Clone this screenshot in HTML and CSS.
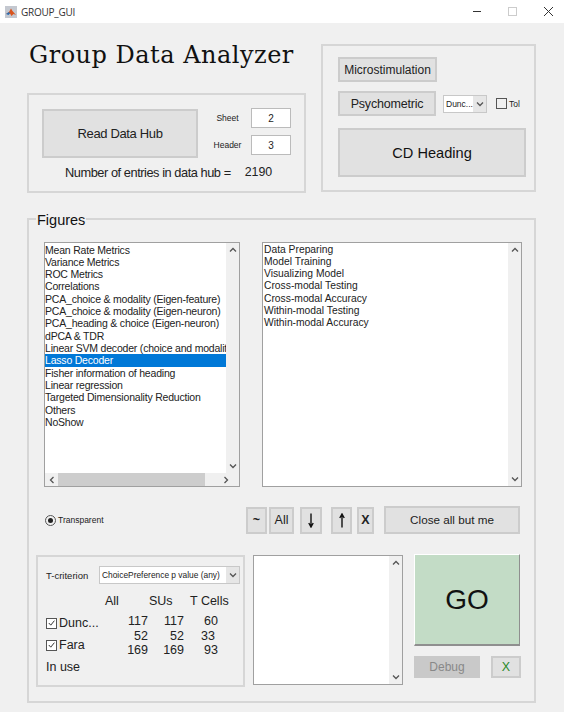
FILE: index.html
```html
<!DOCTYPE html>
<html lang="en">
<head>
  <meta charset="UTF-8" />
  <meta name="viewport" content="width=device-width, initial-scale=1" />
  <title>GROUP_GUI</title>
  <link rel="stylesheet" href="styles.css">
</head>
<body>
  <svg class="defs" width="0" height="0" aria-hidden="true">
    <symbol id="chev-up" viewBox="0 0 8 6"><path d="M1 4.5 L4 1.5 L7 4.5" fill="none" stroke="#555" stroke-width="1.3"/></symbol>
    <symbol id="chev-down" viewBox="0 0 8 6"><path d="M1 1.5 L4 4.5 L7 1.5" fill="none" stroke="#555" stroke-width="1.3"/></symbol>
    <symbol id="chev-left" viewBox="0 0 6 8"><path d="M4.5 1 L1.5 4 L4.5 7" fill="none" stroke="#555" stroke-width="1.3"/></symbol>
    <symbol id="chev-right" viewBox="0 0 6 8"><path d="M1.5 1 L4.5 4 L1.5 7" fill="none" stroke="#555" stroke-width="1.3"/></symbol>
    <symbol id="tick" viewBox="0 0 10 10"><path d="M2 5 L4.2 7.4 L8.2 2.4" fill="none" stroke="#333" stroke-width="1.1"/></symbol>
  </svg>

  <header class="titlebar">
    <svg class="app-icon" width="12" height="12" viewBox="0 0 12 12" aria-hidden="true">
      <rect width="12" height="12" fill="#c4c8d0"/>
      <path d="M1 8 L4 6 L6 2.5 L7.5 5 L11 9 L8.5 8 L6.5 10 L5 7.5 Z" fill="#d9541e"/>
      <path d="M1 8 L4 6 L5 7.5 L3.5 9 Z" fill="#2b6cb0"/>
    </svg>
    <span class="app-name">GROUP_GUI</span>
    <div class="win-controls">
      <svg width="9" height="9" viewBox="0 0 9 9" aria-hidden="true"><path d="M0 4.5 H8" stroke="#333" stroke-width="1"/></svg>
      <svg width="9" height="9" viewBox="0 0 9 9" aria-hidden="true"><rect x="0.5" y="0.5" width="8" height="8" fill="none" stroke="#ccc"/></svg>
      <svg width="11" height="11" viewBox="0 0 11 11" aria-hidden="true"><path d="M1 1 L10 10 M10 1 L1 10" stroke="#333" stroke-width="1"/></svg>
    </div>
  </header>

  <main class="content">
    <div class="top">
      <div class="top-left">
        <h1 class="app-title">Group Data Analyzer</h1>
        <section class="panel hub-panel">
          <div class="hub-row">
            <button class="btn read-btn">Read Data Hub</button>
            <div class="hub-fields">
              <label class="field"><span class="field-label">Sheet</span><input class="field-input" value="2"></label>
              <label class="field"><span class="field-label">Header</span><input class="field-input" value="3"></label>
            </div>
          </div>
          <p class="entries"><span class="entries-label">Number of entries in data hub =</span><span>2190</span></p>
        </section>
      </div>

      <section class="panel plot-panel">
        <button class="btn micro-btn">Microstimulation</button>
        <div class="psy-row">
          <button class="btn psy-btn">Psychometric</button>
          <div class="popup mini-popup"><span class="popup-text">Dunc...</span><span class="popup-arrow"><svg width="8" height="6"><use href="#chev-down"/></svg></span></div>
          <span class="check tol-check"></span>
          <span class="tol-label">Tol</span>
        </div>
        <button class="btn cd-btn">CD Heading</button>
      </section>
    </div>

    <section class="panel figures">
      <h2 class="legend">Figures</h2>

      <div class="lists">
        <div class="listbox list-main">
          <ul class="items">
            <li>Mean Rate Metrics</li>
            <li>Variance Metrics</li>
            <li>ROC Metrics</li>
            <li>Correlations</li>
            <li>PCA_choice &amp; modality (Eigen-feature)</li>
            <li>PCA_choice &amp; modality (Eigen-neuron)</li>
            <li>PCA_heading &amp; choice (Eigen-neuron)</li>
            <li>dPCA &amp; TDR</li>
            <li>Linear SVM decoder (choice and modalit</li>
            <li class="selected">Lasso Decoder</li>
            <li>Fisher information of heading</li>
            <li>Linear regression</li>
            <li>Targeted Dimensionality Reduction</li>
            <li>Others</li>
            <li>NoShow</li>
          </ul>
          <div class="vscroll"><svg width="8" height="6"><use href="#chev-up"/></svg><svg width="8" height="6"><use href="#chev-down"/></svg></div>
          <div class="hscroll">
            <svg width="6" height="8"><use href="#chev-left"/></svg>
            <div class="hthumb"></div>
            <svg width="6" height="8"><use href="#chev-right"/></svg>
          </div>
        </div>

        <div class="listbox list-side">
          <ul class="items">
            <li>Data Preparing</li>
            <li>Model Training</li>
            <li>Visualizing Model</li>
            <li>Cross-modal Testing</li>
            <li>Cross-modal Accuracy</li>
            <li>Within-modal Testing</li>
            <li>Within-modal Accuracy</li>
          </ul>
          <div class="vscroll"><svg width="8" height="6"><use href="#chev-up"/></svg><svg width="8" height="6"><use href="#chev-down"/></svg></div>
        </div>
      </div>

      <div class="tools">
        <span class="radio"></span>
        <span class="radio-label">Transparent</span>
        <button class="btn tool tool-tilde">~</button>
        <button class="btn tool tool-all">All</button>
        <button class="btn tool tool-down">
          <svg width="8" height="15" viewBox="0 0 8 15" aria-hidden="true"><path d="M4 0.5 V13 M1.8 10 L4 14 L6.2 10" fill="none" stroke="#111" stroke-width="1.4"/></svg>
        </button>
        <button class="btn tool tool-up">
          <svg width="8" height="15" viewBox="0 0 8 15" aria-hidden="true"><path d="M4 14.5 V2 M1.8 5 L4 1 L6.2 5" fill="none" stroke="#111" stroke-width="1.4"/></svg>
        </button>
        <button class="btn tool tool-x">X</button>
        <button class="btn close-btn">Close all but me</button>
      </div>

      <div class="bottom">
        <section class="panel cells-panel">
          <div class="criterion">
            <span class="criterion-label">T-criterion</span>
            <div class="popup wide-popup"><span class="popup-text">ChoicePreference p value (any)</span><span class="popup-arrow"><svg width="8" height="6"><use href="#chev-down"/></svg></span></div>
          </div>
          <div class="cell-heads"><span>All</span><span>SUs</span><span>T Cells</span></div>
          <div class="cell-body">
            <div class="monkeys">
              <div class="monkey"><span class="check checked"><svg width="10" height="10"><use href="#tick"/></svg></span>Dunc...</div>
              <div class="monkey"><span class="check checked"><svg width="10" height="10"><use href="#tick"/></svg></span>Fara</div>
              <div class="monkey in-use">In use</div>
            </div>
            <div class="counts">
              <span>117</span><span>117</span><span>60</span>
              <span>52</span><span>52</span><span class="nudge">33</span>
              <span>169</span><span>169</span><span>93</span>
            </div>
          </div>
        </section>

        <div class="listbox log-box">
          <div class="log-text"></div>
          <div class="vscroll"><svg width="8" height="6"><use href="#chev-up"/></svg><svg width="8" height="6"><use href="#chev-down"/></svg></div>
        </div>

        <div class="run-col">
          <button class="go-btn">GO</button>
          <div class="run-row">
            <button class="btn debug-btn">Debug</button>
            <button class="btn x-btn">X</button>
          </div>
        </div>
      </div>
    </section>
  </main>
</body>
</html>
```

FILE: styles.css
```css
* {
  box-sizing: border-box;
}
html, body {
  margin: 0;
  padding: 0;
}
body {
  width: 564px;
  height: 712px;
  overflow: hidden;
  background: #f0f0f0;
  font-family: "Liberation Sans", Arial, sans-serif;
  color: #222;
}
.defs {
  display: block;
  height: 0;
}
ul {
  list-style: none;
  margin: 0;
  padding: 0;
}

/* title bar */
.titlebar {
  height: 23px;
  background: #fff;
  display: flex;
  align-items: center;
  padding-left: 5px;
}
.app-icon {
  margin-right: 4px;
}
.app-name {
  font-family: "Open Sans", sans-serif;
  font-size: 10px;
  letter-spacing: -0.25px;
  color: #333;
}
.win-controls {
  margin-left: auto;
  display: flex;
  align-items: center;
  gap: 26px;
  padding-right: 10px;
}

.content {
  padding-left: 27px;
  width: 536px;
}
.panel {
  border: 2px solid #d6d6d6;
}
.btn {
  background: #e1e1e1;
  border: 2px solid #cccccc;
  font-family: inherit;
  color: #222;
  padding: 0;
}

/* top area */
.top {
  display: flex;
  gap: 15px;
  padding-top: 21px;
}
.top-left {
  width: 279px;
}
.app-title {
  margin: 0;
  height: 49px;
  padding: 0 0 0 2px;
  font-family: "DejaVu Serif", serif;
  font-weight: normal;
  font-size: 24px;
  line-height: 22px;
  letter-spacing: 0.5px;
  color: #111;
  white-space: nowrap;
}
.hub-panel {
  height: 100px;
  padding: 14px 0 0 13px;
}
.hub-row {
  display: flex;
}
.read-btn {
  width: 156px;
  height: 49px;
  font-size: 13px;
  letter-spacing: -0.35px;
}
.hub-fields {
  margin-left: 14px;
  margin-top: -1px;
  display: flex;
  flex-direction: column;
  gap: 7px;
}
.field {
  display: flex;
  align-items: center;
  width: 79px;
  justify-content: space-between;
}
.field-label {
  width: 31px;
  text-align: center;
  font-size: 8.5px;
}
.field-input {
  width: 40px;
  height: 20px;
  border: 1px solid #bbb;
  background: #fff;
  text-align: center;
  font-family: inherit;
  font-size: 10px;
  color: #222;
  padding: 0;
}
.entries {
  margin: 7px 0 0 23px;
  font-size: 12.4px;
  display: flex;
  gap: 14px;
  white-space: nowrap;
}
.entries-label {
  font-size: 12.8px;
  letter-spacing: -0.45px;
}
.plot-panel {
  width: 215px;
  height: 148px;
  padding: 11px 0 0 15px;
}
.micro-btn {
  display: block;
  width: 99px;
  height: 25px;
  font-size: 12px;
}
.psy-row {
  display: flex;
  align-items: center;
  margin-top: 9px;
}
.psy-btn {
  width: 98px;
  height: 25px;
  font-size: 12.5px;
  letter-spacing: -0.2px;
}
.popup {
  display: flex;
  align-items: stretch;
  background: #fff;
  border: 1px solid #c8c8c8;
}
.popup-text {
  flex: 1;
  padding-left: 2px;
  white-space: nowrap;
  overflow: hidden;
}
.popup-arrow {
  background: #e6e6e6;
  width: 13px;
  display: flex;
  align-items: center;
  justify-content: center;
}
.mini-popup {
  width: 44px;
  height: 18px;
  margin-left: 7px;
  font-size: 8.5px;
  line-height: 16px;
}
.check {
  width: 11px;
  height: 11px;
  border: 1px solid #555;
  background: #fff;
  display: inline-flex;
  align-items: center;
  justify-content: center;
  flex: none;
}
.tol-check {
  margin-left: 9px;
  background: transparent;
}
.tol-label {
  margin-left: 2px;
  font-size: 8.5px;
}
.cd-btn {
  display: block;
  width: 188px;
  height: 49px;
  margin-top: 12px;
  font-size: 14.6px;
  color: #111;
}

/* figures area */
.figures {
  position: relative;
  width: 509px;
  height: 485px;
  margin-top: 25px;
  padding: 22px 0 0 7px;
}
.legend {
  position: absolute;
  top: -8px;
  left: 7px;
  margin: 0;
  padding: 0 1px;
  background: #f0f0f0;
  font-size: 14.5px;
  font-weight: normal;
  line-height: 16px;
  color: #111;
}
.lists {
  display: flex;
  gap: 22px;
  margin-left: 8px;
}
.listbox {
  position: relative;
  border: 1px solid #a0a0a0;
  background: #fff;
  height: 245px;
}
.list-main {
  width: 196px;
}
.list-side {
  width: 260px;
}
.items {
  padding-top: 0.5px;
  font-size: 10.5px;
  letter-spacing: -0.2px;
  line-height: 12.33px;
  color: #222;
}
.list-side .items {
  padding-left: 1px;
  font-size: 10.3px;
  letter-spacing: 0;
}
.items li {
  white-space: nowrap;
  margin-right: 13px;
}
.items .selected {
  background: #0078d7;
  color: #fff;
}
.vscroll {
  position: absolute;
  top: 0;
  right: 0;
  bottom: 0;
  width: 13px;
  background: #f0f0f0;
  display: flex;
  flex-direction: column;
  justify-content: space-between;
  align-items: center;
  padding: 4px 0;
}
.list-main .vscroll {
  bottom: 13px;
}
.hscroll {
  position: absolute;
  left: 0;
  right: 0;
  bottom: 0;
  height: 13px;
  background: #f0f0f0;
  display: flex;
  align-items: center;
  padding: 0 10px 0 4px;
}
.hthumb {
  width: 147px;
  height: 100%;
  margin: 0 18px 0 3px;
  background: #cdcdcd;
}

/* tool row */
.tools {
  display: flex;
  align-items: center;
  margin-top: 19px;
  margin-left: 9px;
  height: 28px;
}
.radio {
  position: relative;
  width: 11px;
  height: 11px;
  border: 1px solid #555;
  border-radius: 50%;
}
.radio::after {
  content: "";
  position: absolute;
  inset: 2px;
  border-radius: 50%;
  background: #222;
}
.radio-label {
  margin-left: 2px;
  width: 188px;
  font-size: 8.5px;
}
.tool {
  height: 27px;
  display: flex;
  align-items: center;
  justify-content: center;
  font-size: 12.5px;
}
.tool-tilde {
  width: 21px;
  font-weight: bold;
  margin-right: 2px;
}
.tool-all {
  width: 25px;
  margin-right: 6px;
}
.tool-down {
  width: 22px;
  margin-right: 9px;
}
.tool-up {
  width: 21px;
  margin-right: 5px;
}
.tool-x {
  width: 17px;
  font-weight: bold;
  margin-right: 10px;
}
.close-btn {
  width: 136px;
  height: 28px;
  padding-bottom: 2px;
  font-size: 11.7px;
}

/* bottom row */
.bottom {
  display: flex;
  align-items: flex-start;
  margin-top: 21px;
}
.cells-panel {
  width: 209px;
  height: 132px;
  padding: 9px 0 0 8px;
  font-size: 12.5px;
}
.criterion {
  display: flex;
  align-items: center;
  height: 18px;
}
.criterion-label {
  width: 53px;
  font-size: 9.5px;
}
.wide-popup {
  width: 141px;
  height: 18px;
  font-size: 8.4px;
  line-height: 16px;
}
.cell-heads {
  height: 18px;
  margin-top: 10px;
  padding-left: 59px;
  display: flex;
}
.cell-heads span:nth-child(1) {
  width: 44px;
}
.cell-heads span:nth-child(2) {
  width: 41px;
}
.cell-body {
  display: flex;
}
.monkeys {
  width: 81px;
}
.monkey {
  display: flex;
  align-items: center;
  gap: 2px;
  height: 22px;
  white-space: nowrap;
}
.counts {
  display: grid;
  grid-template-columns: 21px 36px 34px;
  grid-auto-rows: 14.5px;
  margin-top: 2px;
  text-align: right;
  line-height: 15px;
}
.nudge {
  padding-right: 3px;
}
.log-box {
  width: 150px;
  height: 130px;
  margin-left: 8px;
}
.log-text {
  height: 100%;
}
.run-col {
  width: 107px;
  margin-left: 11px;
  margin-top: -1px;
}
.go-btn {
  display: block;
  width: 106px;
  height: 92px;
  background: #c3dcc6;
  border: 1px solid #fff;
  border-right-color: #8f8f8f;
  border-bottom: 2px solid #8f8f8f;
  font-family: inherit;
  font-size: 28px;
  color: #111;
  padding: 0;
}
.run-row {
  display: flex;
  justify-content: space-between;
  margin-top: 10px;
}
.debug-btn {
  width: 66px;
  height: 22px;
  background: #c9c9c9;
  border-color: #c9c9c9;
  color: #888;
  font-size: 12px;
}
.x-btn {
  width: 30px;
  height: 22px;
  color: #2a8a2a;
  font-size: 12.5px;
}
```
